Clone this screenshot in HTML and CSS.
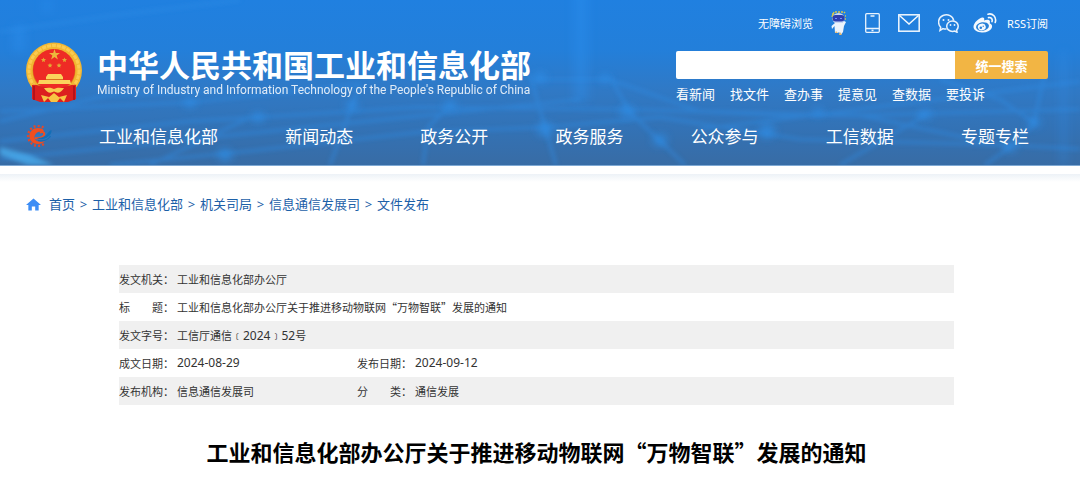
FILE: index.html
```html
<!DOCTYPE html>
<html lang="zh-CN">
<head>
    <meta charset="UTF-8">
    <meta name="viewport" content="width=device-width, initial-scale=1.0">
    <title>工业和信息化部办公厅关于推进移动物联网“万物智联”发展的通知</title>
    <link rel="stylesheet" href="styles.css">
</head>
<body>
    <header class="header">
        <svg class="header-bg" viewBox="0 0 1080 166" preserveAspectRatio="none" aria-hidden="true">
            <defs>
                <filter id="soft" x="-20%" y="-20%" width="140%" height="140%"><feGaussianBlur stdDeviation="2"/></filter>
                <filter id="wide" x="-60%" y="-20%" width="220%" height="140%"><feGaussianBlur stdDeviation="5"/></filter>
                <filter id="glow" x="-100%" y="-100%" width="300%" height="300%"><feGaussianBlur stdDeviation="4"/></filter>
            </defs>
            <g filter="url(#soft)" fill="none" stroke="#2f8de6" stroke-width="3" opacity=".5">
                <path d="M0 32L110 16L240 0M0 112L190 103L360 85M0 142L190 122L420 108L620 110L860 116L1080 110"/>
                <path d="M110 166L250 152L420 133L545 128L660 118L800 140L1010 146L1080 150"/>
                <path d="M530 75L545 128L556 166M450 106L428 128L423 166M610 78L630 113L660 142L685 166"/>
                <path d="M535 80L610 80L700 112L780 116L860 116M940 80L1000 100L1035 124L1010 148L985 166"/>
                <path d="M250 118L150 166M360 85L330 166M860 116L1010 148M925 116L840 166M1045 72L1034 124"/>
                <path d="M580 100L0 160M700 130L1080 82M0 122L110 95L230 92"/>
            </g>
            <g filter="url(#wide)" opacity=".35" fill="#2f93f2">
                <path d="M574 -10h14v112h-14zM13 26h12v26h-12zM43 0h8v12h-8zM1061 52h5v114h-5z"/>
            </g>
            <g filter="url(#glow)" fill="#2e91ec" opacity=".6">
                <circle cx="450" cy="106" r="6"/><circle cx="545" cy="130" r="8"/><circle cx="627" cy="112" r="7"/>
                <circle cx="660" cy="141" r="7"/><circle cx="605" cy="79" r="5"/><circle cx="540" cy="78" r="6"/>
                <circle cx="767" cy="132" r="8"/><circle cx="925" cy="115" r="6"/><circle cx="1034" cy="123" r="6"/>
                <circle cx="1010" cy="148" r="6"/><circle cx="190" cy="103" r="6"/><circle cx="258" cy="118" r="6"/>
                <circle cx="352" cy="106" r="6"/><circle cx="225" cy="156" r="7"/><circle cx="818" cy="113" r="5"/>
            </g>
            <path d="M0 148L30 156L54 166H28L0 156z" fill="#4cb4f6" opacity=".7" filter="url(#soft)"/>
        </svg>

        <div class="header-top">
            <a class="brand" href="#">
                <svg class="emblem" viewBox="0 0 56 60" aria-hidden="true">
                    <path d="M7 42L49 42L49 56L43 59H13L6 56z" fill="#c9171e"/>
                    <circle cx="28" cy="28.5" r="28" fill="#f2b632"/>
                    <circle cx="28" cy="28.5" r="25" fill="none" stroke="#fbcb50" stroke-width="3" stroke-dasharray="4 1"/>
                    <circle cx="28" cy="28.5" r="21.5" fill="#d98b1c"/>
                    <circle cx="28" cy="28" r="21" fill="#ee2b25"/>
                    <path d="M28.500 7l1.300 4h4.200l-3.400 2.500 1.300 4-3.400-2.500-3.400 2.500 1.300-4-3.400-2.500h4.200z" fill="#ecb83c"/>
                    <path d="M17.500 15.500l.7 1.600 1.800.1-1.400 1.200.4 1.700-1.500-.9-1.500.9.4-1.700-1.400-1.200 1.800-.1zM38.500 15.500l.7 1.600 1.800.1-1.400 1.200.4 1.700-1.500-.9-1.500.9.4-1.700-1.400-1.200 1.800-.1zM24 21l.7 1.600 1.800.1-1.400 1.200.4 1.700-1.500-.9-1.500.9.4-1.700-1.400-1.200 1.800-.1zM33 21l.7 1.600 1.800.1-1.400 1.200.4 1.700-1.500-.9-1.500.9.4-1.700-1.400-1.200 1.800-.1z" fill="#e4aa35"/>
                    <path d="M22 32h13l2 3H20zM20 35h17v3H20zM13 38h31l1 4H12z" fill="#fbd45c"/>
                    <path d="M20 37.500h17" stroke="#d9731f" stroke-width="1"/>
                    <path d="M6 43c5-1 8 2 13 2l9 5 9-5c5 0 8-3 13-2v14l-8 3H14l-8-3z" fill="#dc201f"/>
                    <path d="M18 46c4 0 6-1 10 1 4-2 6-1 10-1-3 5-7 6-10 3-3 3-7 2-10-3z" fill="#f9cb4f"/>
                    <path d="M8 44v14M48 44v14" stroke="#b5121b" stroke-width="2"/>
                    <path d="M15 53l8 2-5 5zM41 53l-8 2 5 5zM28 51l6 5-3 4h-6l-3-4z" fill="#f8c544"/>
                </svg>
                <span class="brand-text">
                    <span class="brand-cn">中华人民共和国工业和信息化部</span>
                    <span class="brand-en">Ministry of Industry and Information Technology of the People's Republic of China</span>
                </span>
            </a>

            <div class="tools">
                <div class="quick">
                    <a class="quick-text" href="#">无障碍浏览</a>
                    <a href="#" aria-label="智能问答">
                        <svg width="16" height="24" viewBox="0 0 16 24">
                            <path d="M1 6L3 1M5 2V0M8 2V0M11 2V0M13 2l1-1M1 3h2M14 5h1M1 8h1M14 8h1" stroke="#d6c84c" stroke-width="1.500"/>
                            <ellipse cx="7.500" cy="7.500" rx="6" ry="5.500" fill="#c9d8f5"/>
                            <rect x="1.500" y="4" width="12" height="6.500" rx="3" fill="#2d3fae"/>
                            <path d="M4 7.500h2M9 7.500h2" stroke="#6f8dff"/>
                            <path d="M4 12h7l2-2 2 1-2 4-1 6-1.500 2H9l-1-2-1 1H4l-.5-7L1 18l-.5-3z" fill="#edf4fc"/>
                            <path d="M5 20l-1 2h3zM9 21l-1 3h3z" fill="#e7b86c"/>
                        </svg>
                    </a>
                    <a href="#" aria-label="移动客户端">
                        <svg width="15" height="20" viewBox="0 0 15 20" fill="none" stroke="#e9f3fd" stroke-width="1.300">
                            <rect x=".7" y=".7" width="13.600" height="18.600" rx="1"/>
                            <path d="M1 15.500h13M5.500 3h4M6.500 17.500h2"/>
                        </svg>
                    </a>
                    <a href="#" aria-label="邮箱">
                        <svg width="22" height="18" viewBox="0 0 22 18" fill="none" stroke="#f2f8fe" stroke-width="1.500">
                            <rect x=".8" y=".8" width="20.400" height="16.400"/>
                            <path d="M1.500 1.500L11 10l9.500-8.500"/>
                        </svg>
                    </a>
                    <a href="#" aria-label="微信">
                        <svg width="21" height="19" viewBox="0 0 21 19" fill="none" stroke="#e9f3fd" stroke-width="1.500">
                            <path d="M8.500 15c-1.200.2-2.500 0-3.500-.4L2 16.500l.7-3.300C-.8 9.500.2 3.500 5 1.500c5-2 10 .6 10.700 5.200"/>
                            <path d="M14.500 7c-3.200 0-5.800 2.300-5.800 5.200s2.600 5.200 5.800 5.200c.8 0 1.600-.1 2.300-.4l2.200 1.200-.4-2.300c3.300-3.400 1-8.900-4.100-8.900z"/>
                            <g fill="#e9f3fd" stroke="none"><circle cx="5.500" cy="6" r="1"/><circle cx="10.500" cy="6" r="1"/><circle cx="12.500" cy="11" r=".9"/><circle cx="16.500" cy="11" r=".9"/></g>
                        </svg>
                    </a>
                    <a class="weibo" href="#" aria-label="微博">
                        <svg width="24" height="20" viewBox="0 0 24 20">
                            <path d="M10 4.500c1.600.3 1.500 1.800 1 3 2-.8 5.800-1.400 6 1.200 0 .6-.3 1.100-.3 1.500 5 2.200 2.200 9-7.200 9.300C4.500 19.700.5 17.300.5 13.800.5 9.500 7 3.900 10 4.500z" fill="#f4f9fe"/>
                            <ellipse cx="9.500" cy="13.500" rx="6.500" ry="4.300" fill="#2680d8" transform="rotate(-8 9.500 13.500)"/>
                            <ellipse cx="8.800" cy="14" rx="4" ry="3.400" fill="#f4f9fe" transform="rotate(-12 8.800 14)"/>
                            <circle cx="7.800" cy="14.800" r="1.300" fill="#2680d8"/><circle cx="10.200" cy="13.300" r=".7" fill="#2680d8"/>
                            <path d="M15 1.200c4.500-1.300 9 2.800 7.200 8.300M15.500 4.600c2.400-.6 4.400 1.300 3.500 4" fill="none" stroke="#f4f9fe" stroke-width="1.600" stroke-linecap="round"/>
                        </svg>
                    </a>
                    <a class="quick-text" href="#">RSS订阅</a>
                </div>
                <form class="search">
                    <input type="text" name="q" aria-label="搜索">
                    <button type="submit">统一搜索</button>
                </form>
                <div class="shortcuts">
                    <a href="#">看新闻</a>
                    <a href="#">找文件</a>
                    <a href="#">查办事</a>
                    <a href="#">提意见</a>
                    <a href="#">查数据</a>
                    <a href="#">要投诉</a>
                </div>
            </div>
        </div>

        <nav class="nav">
            <svg class="nav-logo" viewBox="0 0 26 22" aria-hidden="true">
                <path d="M17.500 2.500A10 10 0 1 0 18 19" fill="none" stroke="#e2482b" stroke-width="2.400" stroke-dasharray="2 2.100"/>
                <path d="M12 3C7 3 3.500 6.500 3.500 11s3.500 8 8.500 8c3 0 5.500-1 7-3-4 1.500-9.500 1-10.500-3-.2-1.200 0-2.300.7-3.300C11 7 15 5.500 17 7.500c1.500-1.500 1-4.500-5-4.500z" fill="#f04e1f"/>
                <path d="M9 13c4 1 9-1 9.300-4 .1-2-2.300-2.600-4.500-1.500" fill="none" stroke="#f04e1f" stroke-width="2"/>
                <path d="M25.500 5c.5 4.500-4 8.500-9 9-2.500.3-4.500-.1-5.500-1 4 .2 8-1.400 10-4 1.500-2 2-3 4.500-4z" fill="#126fb8"/>
                <path d="M24.500 11c-2.500 4-7 5.500-12.500 4.500" fill="none" stroke="#126fb8" stroke-width="1.200"/>
            </svg>
            <div class="nav-links">
                <a href="#">工业和信息化部</a>
                <a href="#">新闻动态</a>
                <a href="#">政务公开</a>
                <a href="#">政务服务</a>
                <a href="#">公众参与</a>
                <a href="#">工信数据</a>
                <a href="#">专题专栏</a>
            </div>
        </nav>
    </header>
    <div class="divider"></div>

    <div class="crumbs">
        <svg class="home" viewBox="0 0 16 13" aria-hidden="true"><path d="M8 0l8 7h-2.500v6H9.800V8.500H6.200V13H2.500V7H0z" fill="#3d8df5"/></svg>
        <a href="#">首页</a><span>&gt;</span>
        <a href="#">工业和信息化部</a><span>&gt;</span>
        <a href="#">机关司局</a><span>&gt;</span>
        <a href="#">信息通信发展司</a><span>&gt;</span>
        <a href="#">文件发布</a>
    </div>

    <main class="article">
        <table class="info">
            <colgroup>
                <col class="col-label"><col class="col-value"><col class="col-label"><col>
            </colgroup>
            <tr>
                <th scope="row">发文机关：</th>
                <td colspan="3">工业和信息化部办公厅</td>
            </tr>
            <tr>
                <th scope="row">标　　题：</th>
                <td colspan="3">工业和信息化部办公厅关于推进移动物联网“万物智联”发展的通知</td>
            </tr>
            <tr>
                <th scope="row">发文字号：</th>
                <td colspan="3">工信厅通信﹝<span class="num">2024</span>﹞<span class="num">52</span>号</td>
            </tr>
            <tr>
                <th scope="row">成文日期：</th>
                <td class="num">2024-08-29</td>
                <th scope="row">发布日期：</th>
                <td class="num">2024-09-12</td>
            </tr>
            <tr>
                <th scope="row">发布机构：</th>
                <td>信息通信发展司</td>
                <th scope="row">分　　类：</th>
                <td>通信发展</td>
            </tr>
        </table>
        <h1>工业和信息化部办公厅关于推进移动物联网“万物智联”发展的通知</h1>
    </main>
</body>
</html>
```
FILE: styles.css
```css
* {
    box-sizing: border-box;
}
body {
    margin: 0;
    font-family: "Noto Sans CJK SC", sans-serif;
    font-size: 13px;
    color: #333;
    background: #fff;
}
a {
    color: inherit;
    text-decoration: none;
}
svg {
    display: block;
}
.header {
    position: relative;
    padding: 10px 32px 14px 26px;
    color: #fff;
    background: linear-gradient(#2080e0 0%, #237fda 30%, #3079c5 55%, #3372b5 78%, #386ca5 100%);
    border-bottom: 1px solid #7fa9d4;
}
.header-bg {
    position: absolute;
    top: 0;
    left: 0;
    width: 100%;
    height: 100%;
}
.header-top {
    position: relative;
    display: flex;
    justify-content: space-between;
}
.brand {
    display: flex;
    align-items: center;
    gap: 15px;
    padding-top: 32px;
    height: 92px;
}
.emblem {
    width: 56px;
    height: 60px;
}
.brand-text {
    display: flex;
    flex-direction: column;
}
.brand-cn {
    font-size: 31px;
    font-weight: bold;
    line-height: 36px;
}
.brand-en {
    font-family: Roboto, sans-serif;
    font-size: 12px;
    line-height: 16px;
    opacity: .85;
}
.tools {
    width: 372px;
}
.quick {
    display: flex;
    align-items: center;
    justify-content: flex-end;
    gap: 18px;
    height: 26px;
}
.quick-text {
    font-family: "Noto Sans", "Noto Sans CJK SC", sans-serif;
    font-size: 11px;
}
.weibo {
    margin-left: -4px;
}
.quick-text:last-child {
    margin-left: -8px;
}
.search {
    display: flex;
    margin-top: 15px;
    height: 28px;
}
.search input {
    flex: 1;
    min-width: 0;
    padding: 0 8px;
    border: none;
    border-radius: 2px 0 0 2px;
    background: #fff;
}
.search button {
    width: 93px;
    padding: 0;
    border: none;
    border-radius: 0 2px 2px 0;
    background: #f2b544;
    color: #fff;
    font-family: inherit;
    font-size: 13px;
    font-weight: bold;
    cursor: pointer;
}
.shortcuts {
    display: flex;
    gap: 15px;
    margin-top: 5px;
    line-height: 20px;
}
.nav {
    position: relative;
    display: flex;
    align-items: center;
    gap: 47px;
    margin-top: 17px;
    padding-right: 19px;
    line-height: 30px;
}
.nav-logo {
    width: 26px;
    height: 22px;
}
.nav-links {
    flex: 1;
    display: flex;
    justify-content: space-between;
    font-size: 17px;
}
.divider {
    height: 16px;
    background: linear-gradient(#fff 8px, #edf2f7 8px, #fff 16px);
}
.crumbs {
    display: flex;
    align-items: center;
    padding: 12px 26px;
    line-height: 20px;
    color: #1c60a8;
}
.crumbs span {
    width: 17px;
    font-family: "Noto Sans", sans-serif;
    text-align: center;
}
.home {
    width: 15px;
    height: 13px;
    margin-right: 8px;
}
.article {
    padding: 39px 126px 0 119px;
}
.info {
    width: 100%;
    table-layout: fixed;
    border-collapse: collapse;
    font-size: 11px;
    line-height: 16px;
}
.info tr:nth-child(odd) {
    background: #f0f0f0;
}
.info th,
.info td {
    height: 28px;
    padding: 0;
    font-weight: normal;
    text-align: left;
}
.info .num {
    font-family: "Noto Sans", sans-serif;
    font-size: 12px;
}
.col-label {
    width: 58px;
}
.col-value {
    width: 180px;
}
h1 {
    margin: 29px 0 0;
    font-size: 22px;
    line-height: 34px;
    text-align: center;
    color: #000;
}
```
